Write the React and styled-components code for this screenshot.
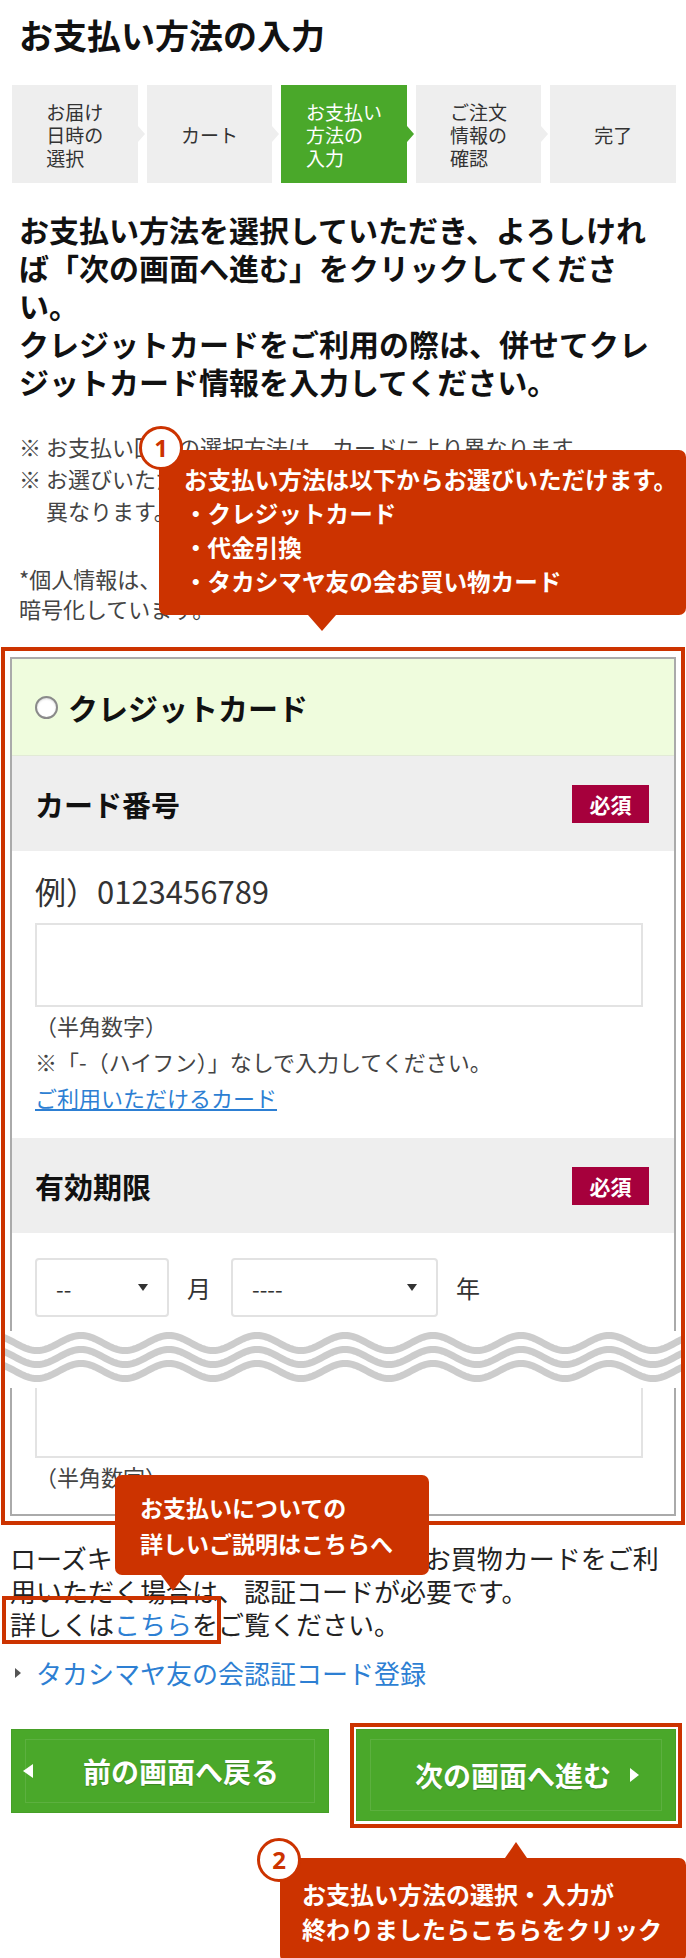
import React from "react";
import styled, { createGlobalStyle } from "styled-components";

const RED = "#cc3300";
const GREEN = "#4aa82a";
const JP = `"Noto Sans CJK JP", "Noto Sans", sans-serif`;

const GlobalStyle = createGlobalStyle`
  html, body { margin: 0; padding: 0; background: #fff; }
  body { font-family: ${JP}; color: #222; }
  * { box-sizing: border-box; }
`;

const Page = styled.div`
  position: relative;
  width: 686px;
  height: 1958px;
  overflow: hidden;
  background: #fff;
`;

const Title = styled.h1`
  margin: 0;
  padding: 14px 19px 0;
  font-size: 34px;
  line-height: 42px;
  font-weight: 700;
  color: #111;
`;

const Steps = styled.ol`
  list-style: none;
  margin: 29px 0 0;
  padding: 0 10px 0 12px;
  display: flex;
  gap: 9px;
`;

const Step = styled.li`
  position: relative;
  flex: 1;
  height: 98px;
  display: flex;
  align-items: center;
  justify-content: center;
  background: ${(p) => (p.$active ? GREEN : "#eeeeee")};
  color: ${(p) => (p.$active ? "#fff" : "#333")};
  font-size: 19px;
  line-height: 23px;
  &::after {
    content: "";
    display: ${(p) => (p.$last ? "none" : "block")};
    position: absolute;
    right: -7px;
    top: 50%;
    margin-top: -8px;
    border-left: 7px solid ${(p) => (p.$active ? GREEN : "#eeeeee")};
    border-top: 8px solid transparent;
    border-bottom: 8px solid transparent;
  }
`;

const StepLabel = styled.span`
  text-align: left;
`;

const Lead = styled.p`
  margin: 27px 0 0;
  padding: 0 27px 0 19px;
  font-size: 30px;
  line-height: 38px;
  font-weight: 700;
  color: #111;
`;

const Notes = styled.ul`
  list-style: none;
  margin: 30px 0 0;
  padding: 0 19px;
  font-size: 22px;
  line-height: 32px;
  color: #444;
`;

const Note = styled.li`
  display: flex;
`;

const NoteMark = styled.span`
  flex: none;
  width: 27px;
`;

const Privacy = styled.p`
  margin: 37px 0 0;
  padding: 0 19px;
  font-size: 22px;
  line-height: 30px;
  color: #444;
`;

const Highlight = styled.div`
  margin: 24px 1px 0;
  border: 4px solid ${RED};
  padding: 6px 5px 5px;
`;

const Panel = styled.div`
  border: 2px solid #aaaaaa;
  background: #fff;
`;

const MethodHeader = styled.label`
  display: flex;
  align-items: center;
  gap: 10px;
  height: 97px;
  padding: 0 23px;
  background: #effcdd;
  border-bottom: 1px solid #e2ead6;
  font-size: 30px;
  font-weight: 700;
  color: #111;
`;

const Radio = styled.span`
  flex: none;
  width: 23px;
  height: 23px;
  border-radius: 50%;
  border: 2px solid #8a8a8a;
  background: #fff;
  box-shadow: inset 0 1px 2px rgba(0, 0, 0, 0.15);
`;

const FieldHeader = styled.div`
  display: flex;
  align-items: center;
  justify-content: space-between;
  height: 95px;
  padding: 0 25px 0 23px;
  background: #eeeeee;
  font-size: 29px;
  font-weight: 700;
  color: #111;
`;

const Required = styled.span`
  width: 77px;
  height: 38px;
  display: flex;
  align-items: center;
  justify-content: center;
  background: #a6003c;
  color: #fff;
  font-size: 21px;
  font-weight: 700;
`;

const FieldBody = styled.div`
  padding: ${(p) => p.$pad};
`;

const Example = styled.div`
  font-size: 31px;
  line-height: 40px;
  color: #333;
`;

const TextInput = styled.div`
  width: 608px;
  height: ${(p) => p.$h}px;
  margin-top: ${(p) => p.$mt}px;
  border: 2px solid #e3e3e3;
  border-top-width: ${(p) => (p.$cut ? 0 : 2)}px;
  background: #fff;
`;

const Hint = styled.div`
  font-size: 22px;
  line-height: 36px;
  color: #444;
  &:first-of-type {
    margin-top: 4px;
  }
`;

const CardLink = styled.a`
  display: block;
  font-size: 22px;
  line-height: 36px;
  color: #2d7fd3;
  text-decoration: underline;
`;

const SelectRow = styled.div`
  display: flex;
  align-items: center;
  font-size: 24px;
  color: #333;
`;

const Select = styled.div`
  display: flex;
  align-items: center;
  justify-content: space-between;
  width: ${(p) => p.$w}px;
  height: 59px;
  padding: 0 19px 0 19px;
  border: 2px solid #e2e2e2;
  border-radius: 4px;
  background: #fff;
  font-size: 22px;
  color: #333;
`;

const Caret = styled.span`
  width: 0;
  height: 0;
  border-left: 5px solid transparent;
  border-right: 5px solid transparent;
  border-top: 7px solid #333;
`;

const Unit = styled.span`
  margin: 0 20px 0 18px;
`;

const WaveBreak = styled.div`
  position: relative;
  margin: 0 -7px;
  height: 57px;
  background: #fff;
  svg {
    display: block;
  }
`;

const Body = styled.p`
  margin: 16px 0 0;
  padding: 0 16px 0 10px;
  font-size: 26px;
  line-height: 33px;
  color: #222;
`;

const Marked = styled.span`
  position: relative;
  display: inline-block;
  height: 33px;
  &::after {
    content: "";
    position: absolute;
    left: -8px;
    right: -3px;
    top: -11px;
    bottom: -4px;
    border: 4px solid ${RED};
  }
`;

const InlineLink = styled.a`
  color: #2d7fd3;
  text-decoration: none;
`;

const RegisterRow = styled.div`
  display: flex;
  align-items: center;
  gap: 15px;
  margin-top: 15px;
  padding-left: 15px;
  font-size: 26px;
  line-height: 36px;
  color: #2d7fd3;
`;

const Bullet = styled.span`
  width: 0;
  height: 0;
  border-left: 6px solid #555;
  border-top: 5px solid transparent;
  border-bottom: 5px solid transparent;
`;

const ButtonRow = styled.div`
  display: flex;
  justify-content: space-between;
  align-items: flex-start;
  margin-top: 32px;
  padding: 0 4px 0 11px;
`;

const Button = styled.button`
  position: relative;
  display: flex;
  align-items: center;
  width: ${(p) => p.$w}px;
  height: ${(p) => p.$h}px;
  margin-top: ${(p) => p.$mt || 0}px;
  padding: ${(p) => (p.$next ? "0 37px 0 40px" : "0 0 0 12px")};
  border: none;
  background: ${GREEN};
  color: #fff;
  font-family: ${JP};
  font-size: 28px;
  font-weight: 700;
  text-shadow: 0 1px 1px rgba(0, 0, 0, 0.2);
  box-shadow: inset 0 0 0 1px rgba(0, 0, 0, 0.05);
  &::before {
    content: "";
    position: absolute;
    inset: 10px 14px;
    border: 1px solid rgba(255, 255, 255, 0.1);
  }
`;

const ButtonText = styled.span`
  flex: 1;
  text-align: center;
`;

const Arrow = styled.span`
  width: 0;
  height: 0;
  border-top: 7px solid transparent;
  border-bottom: 7px solid transparent;
  ${(p) =>
    p.$left
      ? `border-right: 10px solid #fff;`
      : `border-left: 9px solid #fff;`}
`;

const NextFrame = styled.div`
  border: 4px solid ${RED};
  padding: 2px 2px 3px;
`;

const Callout = styled.div`
  position: absolute;
  z-index: 5;
  left: ${(p) => p.$left}px;
  top: ${(p) => p.$top}px;
  width: ${(p) => p.$width}px;
  height: ${(p) => p.$height}px;
  padding: ${(p) => p.$pad};
  background: ${RED};
  border-radius: 7px;
  color: #fff;
  font-weight: 700;
  font-size: ${(p) => p.$fs}px;
  line-height: ${(p) => p.$lh}px;
  white-space: nowrap;
  &::after {
    content: "";
    position: absolute;
    left: ${(p) => p.$px - p.$pw}px;
    ${(p) =>
      p.$up
        ? `bottom: 100%; border-bottom: 16px solid ${RED};`
        : `top: 100%; border-top: 16px solid ${RED};`}
    border-left: ${(p) => p.$pw}px solid transparent;
    border-right: ${(p) => p.$pw}px solid transparent;
  }
`;

const Num = styled.div`
  position: absolute;
  z-index: 6;
  left: ${(p) => p.$left}px;
  top: ${(p) => p.$top}px;
  width: 44px;
  height: 44px;
  border-radius: 50%;
  border: 3px solid ${RED};
  background: #fff;
  color: ${RED};
  font-family: "Noto Sans", ${JP};
  font-size: 24px;
  font-weight: 700;
  line-height: 38px;
  text-align: center;
`;

const STEPS = [
  { lines: ["お届け", "日時の", "選択"] },
  { lines: ["カート"] },
  { lines: ["お支払い", "方法の", "入力"], active: true },
  { lines: ["ご注文", "情報の", "確認"] },
  { lines: ["完了"] },
];

const WAVE_W = 676;
function wavePath(c) {
  const pts = [];
  for (let x = -4; x <= WAVE_W + 4; x += 2) {
    const y = c + 7.5 * Math.cos((2 * Math.PI * (x - 32)) / 88);
    pts.push(`${x},${y.toFixed(2)}`);
  }
  return "M" + pts.join(" L");
}

function Wave() {
  return (
    <WaveBreak aria-hidden="true">
      <svg width={WAVE_W} height="57" viewBox={`0 0 ${WAVE_W} 57`}>
        {[12, 26, 40].map((c) => (
          <path
            key={c}
            d={wavePath(c)}
            fill="none"
            stroke="#cccccc"
            strokeWidth="7"
          />
        ))}
      </svg>
    </WaveBreak>
  );
}

export default function App() {
  return (
    <Page>
      <GlobalStyle />
      <Title>お支払い方法の入力</Title>

      <Steps>
        {STEPS.map((s, i) => (
          <Step key={i} $active={s.active} $last={i === STEPS.length - 1}>
            <StepLabel>
              {s.lines.map((l, j) => (
                <React.Fragment key={j}>
                  {j > 0 && <br />}
                  {l}
                </React.Fragment>
              ))}
            </StepLabel>
          </Step>
        ))}
      </Steps>

      <Lead>
        お支払い方法を選択していただき、よろしければ「次の画面へ進む」をクリックしてください。
        <br />
        クレジットカードをご利用の際は、併せてクレジットカード情報を入力してください。
      </Lead>

      <Notes>
        <Note>
          <NoteMark>※</NoteMark>
          <span>お支払い回数の選択方法は、カードにより異なります。</span>
        </Note>
        <Note>
          <NoteMark>※</NoteMark>
          <span>
            お選びいただいたお支払い方法により、手数料が
            <br />
            異なります。
          </span>
        </Note>
      </Notes>
      <Privacy>
        *個人情報は、お客様の安全のためSSLにより
        <br />
        暗号化しています。
      </Privacy>

      <Highlight>
        <Panel>
          <MethodHeader>
            <Radio />
            クレジットカード
          </MethodHeader>

          <FieldHeader>
            カード番号
            <Required>必須</Required>
          </FieldHeader>
          <FieldBody $pad="20px 23px 23px">
            <Example>例）0123456789</Example>
            <TextInput $h={84} $mt={12} />
            <Hint>（半角数字）</Hint>
            <Hint>※「-（ハイフン）」なしで入力してください。</Hint>
            <CardLink>ご利用いただけるカード</CardLink>
          </FieldBody>

          <FieldHeader>
            有効期限
            <Required>必須</Required>
          </FieldHeader>
          <FieldBody $pad="25px 23px 14px">
            <SelectRow>
              <Select $w={134}>
                --
                <Caret />
              </Select>
              <Unit>月</Unit>
              <Select $w={207}>
                ----
                <Caret />
              </Select>
              <Unit>年</Unit>
            </SelectRow>
          </FieldBody>

          <Wave />

          <FieldBody $pad="0 23px 20px">
            <TextInput $h={70} $mt={0} $cut />
            <Hint>（半角数字）</Hint>
          </FieldBody>
        </Panel>
      </Highlight>

      <Body>
        ローズキャッシュカード・友の会のお買物カードをご利用いただく場合は、認証コードが必要です。
        <br />
        <Marked>
          詳しくは<InlineLink>こちら</InlineLink>を
        </Marked>
        ご覧ください。
      </Body>

      <RegisterRow>
        <Bullet />
        タカシマヤ友の会認証コード登録
      </RegisterRow>

      <ButtonRow>
        <Button $w={318} $h={84} $mt={6}>
          <Arrow $left />
          <ButtonText>前の画面へ戻る</ButtonText>
        </Button>
        <NextFrame>
          <Button $w={320} $h={92} $next>
            <ButtonText>次の画面へ進む</ButtonText>
            <Arrow />
          </Button>
        </NextFrame>
      </ButtonRow>

      <Num $left={139} $top={426}>1</Num>
      <Callout
        $left={159}
        $top={450}
        $width={527}
        $height={165}
        $pad="12px 4px 0 25px"
        $fs={23.6}
        $lh={34}
        $px={163}
        $pw={14}
      >
        お支払い方法は以下からお選びいただけます。
        <br />
        ・クレジットカード
        <br />
        ・代金引換
        <br />
        ・タカシマヤ友の会お買い物カード
      </Callout>

      <Callout
        $left={115}
        $top={1475}
        $width={314}
        $height={100}
        $pad="14px 10px 0 25px"
        $fs={23}
        $lh={36}
        $px={58}
        $pw={12}
      >
        お支払いについての
        <br />
        詳しいご説明はこちらへ
      </Callout>

      <Num $left={257} $top={1838}>2</Num>
      <Callout
        $left={280}
        $top={1858}
        $width={406}
        $height={104}
        $pad="18px 10px 0 22px"
        $fs={24}
        $lh={35}
        $px={236}
        $pw={11}
        $up
      >
        お支払い方法の選択・入力が
        <br />
        終わりましたらこちらをクリック
      </Callout>
    </Page>
  );
}
